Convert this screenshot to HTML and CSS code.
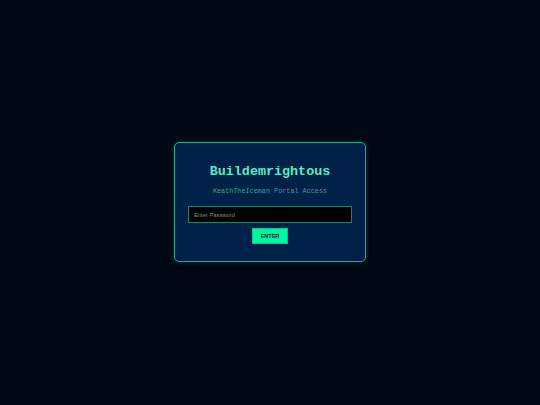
FILE: index.html
```html
<!DOCTYPE html>
<html>
<head>
<meta charset="utf-8">
<link rel="stylesheet" href="styles.css">
</head>
<body>
<div class="page">
  <div class="card">
    <h1 class="title">Buildemrightous</h1>
    <p class="subtitle">KeathTheIceman Portal Access</p>
    <input class="password" type="password" placeholder="Enter Password">
    <button class="enter">ENTER</button>
  </div>
</div>
</body>
</html>
```
FILE: styles.css
```css
html, body {
  margin: 0;
  padding: 0;
  background: #000814;
  height: 100%;
}
.page {
  height: 404px;
  display: flex;
  align-items: center;
  justify-content: center;
}
.card {
  box-sizing: border-box;
  width: 192px;
  height: 120px;
  background: #002147;
  border: 1px solid #1fa88c;
  border-radius: 5px;
  box-shadow: 0 0 4px rgba(0, 245, 160, 0.25);
  padding: 21px 13px 0;
  display: flex;
  flex-direction: column;
  align-items: center;
}
.title {
  margin: 0;
  font-family: "Liberation Mono", "Courier New", monospace;
  font-weight: bold;
  font-size: 13.4px;
  line-height: 15px;
  color: #5fe8c8;
}
.subtitle {
  margin: 8px 0 0;
  font-family: "Liberation Mono", "Courier New", monospace;
  font-size: 6.8px;
  line-height: 8px;
  color: #3b9ea3;
}
.password {
  box-sizing: border-box;
  margin-top: 11px;
  width: 164px;
  height: 17px;
  background: #000000;
  border: 1px solid #1f7d70;
  padding: 0 5px;
  font-family: "Liberation Sans", Arial, sans-serif;
  font-size: 5.8px;
  color: #cccccc;
  outline: none;
}
.password::placeholder {
  color: #8a8a8a;
}
.enter {
  box-sizing: border-box;
  margin-top: 5px;
  width: 36px;
  height: 16px;
  background: #00f5a0;
  border: 1px solid #00c887;
  padding: 0;
  font-family: "Liberation Sans", Arial, sans-serif;
  font-weight: bold;
  font-size: 5.5px;
  color: #0a2a3a;
}
```
